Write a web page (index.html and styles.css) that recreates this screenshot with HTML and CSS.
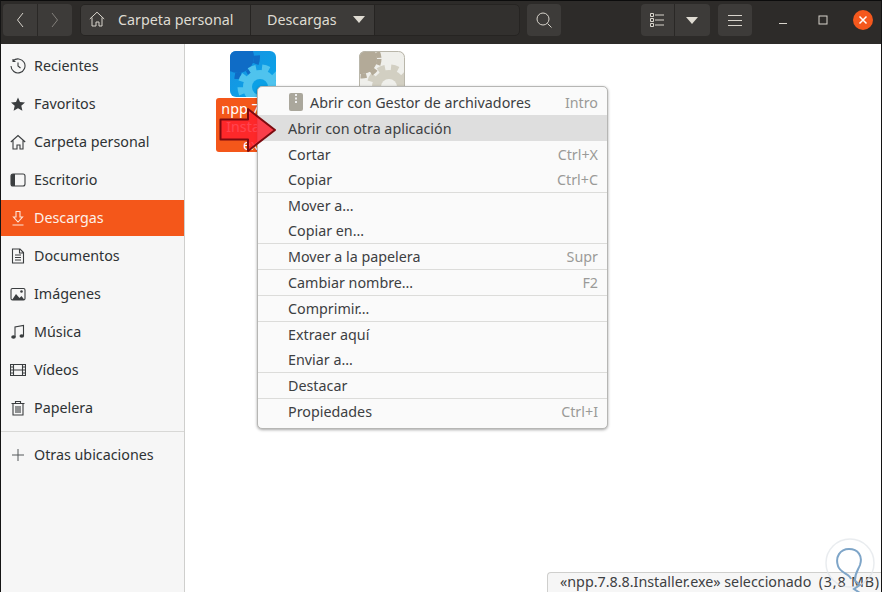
FILE: index.html
```html
<!DOCTYPE html>
<html lang="es">
<head>
<meta charset="utf-8">
<title>Descargas</title>
<link rel="stylesheet" href="styles.css">
</head>
<body>
<div class="window">
  <header class="topbar">
    <div class="btn-group nav-group">
      <button class="tbtn"><svg width="12" height="18" viewBox="0 0 12 18"><path d="M9 2 3.500 9 9 16" class="ico-line"/></svg></button>
      <button class="tbtn dim"><svg width="12" height="18" viewBox="0 0 12 18"><path d="M3 2 8.500 9 3 16" class="ico-line"/></svg></button>
    </div>
    <div class="pathbar">
      <div class="crumb crumb-home">
        <svg width="16" height="16" viewBox="0 0 16 16"><path d="M.8 8 8 1.200 15.200 8M3 6.500V15h4v-4h3v4h3V6.500" class="ico-line"/></svg>
        <span>Carpeta personal</span>
      </div>
      <div class="crumb crumb-last"><span>Descargas</span><i class="caret"></i></div>
    </div>
    <button class="tbtn solo search"><svg width="18" height="18" viewBox="0 0 18 18"><circle cx="8" cy="8" r="6" class="ico-line"/><path d="m12.500 12.500 4 4" class="ico-line"/></svg></button>
    <div class="btn-group view-group">
      <button class="tbtn"><svg width="14" height="14" viewBox="0 0 14 14"><path d="M5 2h9M5 7h9M5 12h9" class="ico-line"/><path d="M.5.500h3v3h-3zM.5 5.500h3v3h-3zM.5 10.500h3v3h-3z" class="ico-line"/></svg></button>
      <button class="tbtn"><i class="caret caret-big"></i></button>
    </div>
    <button class="tbtn solo burger"><svg width="14" height="12" viewBox="0 0 14 12"><path d="M0 1.500h14M0 6.500h14M0 11.500h14" class="ico-line"/></svg></button>
    <div class="winctl">
      <svg class="wmin" width="10" height="10" viewBox="0 0 10 10"><path d="M1 8.500h8" class="ico-line"/></svg>
      <svg class="wmax" width="10" height="10" viewBox="0 0 10 10"><rect x="1" y="1" width="8" height="8" class="ico-line"/></svg>
      <span class="wclose"><svg width="10" height="10" viewBox="0 0 10 10"><path d="m1.500 1.500 7 7M8.500 1.500l-7 7" class="ico-close"/></svg></span>
    </div>
  </header>
  <div class="content">
    <nav class="sidebar">
      <a class="place"><svg width="16" height="16" viewBox="0 0 16 16"><path d="M3 3a7 7 0 1 1-2 5M3 1v2.500h2.500M8 4.500V8l2.500 2" class="sb-line"/></svg><span>Recientes</span></a>
      <a class="place"><svg width="16" height="16" viewBox="0 0 16 16"><path d="m8 1.500 2 4.500 5 .5-3.700 3.300 1.100 4.900L8 12.200l-4.400 2.500 1.100-4.900L1 6.500 6 6z" class="sb-fill"/></svg><span>Favoritos</span></a>
      <a class="place"><svg width="16" height="16" viewBox="0 0 16 16"><path d="M.8 8 8 1.500 15.200 8M3 6.500V15h4v-4h3v4h3V6.500" class="sb-line"/></svg><span>Carpeta personal</span></a>
      <a class="place"><svg width="16" height="16" viewBox="0 0 16 16"><rect x="1" y="2" width="14" height="12" rx="2" class="sb-line"/><path d="M1 4a2 2 0 0 1 2-2h2v12H3a2 2 0 0 1-2-2z" class="sb-fill"/></svg><span>Escritorio</span></a>
      <a class="place active"><svg width="16" height="16" viewBox="0 0 16 16"><path d="M6 1.500h4V7h2.500L8 12 3.500 7H6zM2.500 15h11" class="sb-line-w"/></svg><span>Descargas</span></a>
      <a class="place"><svg width="16" height="16" viewBox="0 0 16 16"><path d="M2.500 1h7.500l3.500 3.500V15h-11zM5 7h6M5 9.500h6M5 12h6M9.500 1v4h4" class="sb-line"/></svg><span>Documentos</span></a>
      <a class="place"><svg width="16" height="16" viewBox="0 0 16 16"><rect x="1" y="2.500" width="14" height="11.500" rx="1.500" class="sb-line"/><path d="m2 14 4-6 3.500 4 2-2 3 4z" class="sb-fill"/><circle cx="11.500" cy="5.500" r="1.300" class="sb-fill"/></svg><span>Imágenes</span></a>
      <a class="place"><svg width="16" height="16" viewBox="0 0 16 16"><path d="M5 13V3l8.500-1.500V12" class="sb-line"/><ellipse cx="3.500" cy="13" rx="2.300" ry="1.800" class="sb-fill"/><ellipse cx="11.800" cy="12" rx="2.300" ry="1.800" class="sb-fill"/></svg><span>Música</span></a>
      <a class="place"><svg width="16" height="16" viewBox="0 0 16 16"><path d="M.5 2.500h15v11H.5zM3.500 2.500v11M12.500 2.500v11M3.500 8h9M.5 5h3M.5 8h3M.5 11h3M12.500 5h3M12.500 8h3M12.500 11h3" class="sb-line"/></svg><span>Vídeos</span></a>
      <a class="place"><svg width="16" height="16" viewBox="0 0 16 16"><path d="M1.500 3.500h13M5.500 3.500V1.500h5v2M3 3.500V15h10V3.500M6 6v7M8 6v7M10 6v7" class="sb-line"/></svg><span>Papelera</span></a>
      <hr class="sb-sep">
      <a class="place place-other"><svg width="16" height="16" viewBox="0 0 16 16"><path d="M8 2v12M2 8h12" class="sb-thin"/></svg><span>Otras ubicaciones</span></a>
    </nav>
    <main class="files">
      <div class="file selected">
        <svg class="app-ico" width="46" height="46" viewBox="0 0 46 46">
          <defs>
            <clipPath id="r1"><rect width="46" height="46" rx="6"/></clipPath>
            <linearGradient id="b1" x1="0" y1="0" x2="1" y2="1"><stop offset="0" stop-color="#1a8fe0"/><stop offset="1" stop-color="#06a8ea"/></linearGradient>
          </defs>
          <g clip-path="url(#r1)">
            <rect width="46" height="46" fill="url(#b1)"/>
            <circle cx="8" cy="6" r="16" fill="#0f6cc6"/>
            <circle cx="8" cy="6" r="19" fill="none" stroke="#0f6cc6" stroke-width="6" stroke-dasharray="7 6"/>
            <circle cx="30" cy="36" r="19" fill="none" stroke="#4fc3ee" stroke-width="7" stroke-dasharray="7 6"/>
            <circle cx="30" cy="36" r="17" fill="#4fc3ee"/>
            <circle cx="30" cy="36" r="8" fill="#0aa0e6"/>
          </g>
        </svg>
        <div class="file-label">npp.7.8.8.<br>Installer.<br>exe</div>
      </div>
      <div class="file">
        <svg class="app-ico" width="46" height="46" viewBox="0 0 46 46">
          <defs><clipPath id="r2"><rect width="46" height="46" rx="6"/></clipPath></defs>
          <g clip-path="url(#r2)">
            <rect width="46" height="46" fill="#efefeb"/>
            <circle cx="30" cy="36" r="19" fill="none" stroke="#d2cfc2" stroke-width="7" stroke-dasharray="7 6"/>
            <circle cx="30" cy="36" r="17" fill="#d2cfc2"/>
            <circle cx="30" cy="36" r="8" fill="#efefeb"/>
            <circle cx="3" cy="8" r="15" fill="#b3aa98"/>
            <circle cx="3" cy="8" r="17" fill="none" stroke="#b3aa98" stroke-width="5" stroke-dasharray="6 5"/>
          </g>
          <rect x=".5" y=".5" width="45" height="45" rx="6" fill="none" stroke="#b9b6aa"/>
        </svg>
      </div>
    </main>
  </div>

  <div class="menu">
    <div class="mi mi-tall mi-icon"><svg width="14" height="18" viewBox="0 0 14 18"><rect width="14" height="18" rx="2" fill="#aaa79c"/><path d="M7 1v9" stroke="#eee" stroke-width="2" stroke-dasharray="2 1.500"/></svg><span>Abrir con Gestor de archivadores</span><kbd>Intro</kbd></div>
    <div class="mi mi-tall hover"><span>Abrir con otra aplicación</span></div>
    <div class="mi mi-after-hover"><span>Cortar</span><kbd>Ctrl+X</kbd></div>
    <div class="mi"><span>Copiar</span><kbd>Ctrl+C</kbd></div>
    <hr class="msep">
    <div class="mi"><span>Mover a…</span></div>
    <div class="mi"><span>Copiar en…</span></div>
    <hr class="msep">
    <div class="mi"><span>Mover a la papelera</span><kbd>Supr</kbd></div>
    <hr class="msep">
    <div class="mi"><span>Cambiar nombre…</span><kbd>F2</kbd></div>
    <hr class="msep">
    <div class="mi"><span>Comprimir…</span></div>
    <hr class="msep">
    <div class="mi"><span>Extraer aquí</span></div>
    <div class="mi"><span>Enviar a…</span></div>
    <hr class="msep">
    <div class="mi"><span>Destacar</span></div>
    <hr class="msep">
    <div class="mi"><span>Propiedades</span><kbd>Ctrl+I</kbd></div>
  </div>

  <svg class="arrow" width="60" height="46" viewBox="0 0 60 46"><path d="M1.500 12.500H29V2l27 21-27 21V32.500H1.500z" fill="#ff1f2d" fill-opacity=".84" stroke="#7c0b10" stroke-width="2" stroke-linejoin="round"/></svg>

  <div class="status">«npp.7.8.8.Installer.exe» seleccionado&nbsp; <span class="status-size">(3,8 MB)</span></div>

  <svg class="mark" width="50" height="60" viewBox="0 0 50 60"><circle cx="25" cy="25" r="24" fill="none" stroke="#dfe4e8" stroke-width="1.500" opacity=".7"/><path d="M26 41c-1-5-11-6-13-13-3-9 2-17 11-17s14 7 11 16c-2 5-5 8-5 15 0 2 4 3 5 5l-6 4 6 4" fill="none" stroke="#7ea5c8" stroke-width="2"/></svg>
</div>
</body>
</html>
```
FILE: styles.css
```css
* { box-sizing: border-box; }
html, body { margin: 0; padding: 0; }
body { width: 882px; height: 592px; overflow: hidden; background: #111; font-family: "Noto Sans", "Liberation Sans", sans-serif; }
svg { display: block; flex: none; }

.window { position: relative; width: 882px; height: 592px; display: flex; flex-direction: column; border-top: 1px solid #0c0c0c; border-left: 1px solid #141414; border-right: 1px solid #141414; background: #fff; overflow: hidden; }

.topbar { height: 43px; flex: none; background: #2d2b29; display: flex; align-items: flex-start; padding: 3px 0 0 2px; color: #dfdbd2; font-size: 14.300px; }
.btn-group { display: flex; height: 32px; }
.tbtn { width: 34.500px; height: 32px; padding: 0; border: 0; background: #3d3b39; display: flex; align-items: center; justify-content: center; }
.btn-group .tbtn:first-child { border-radius: 4px 0 0 4px; border-right: 1px solid #2a2826; }
.btn-group .tbtn:last-child { border-radius: 0 4px 4px 0; }
.tbtn.dim svg { opacity: .45; }
.tbtn.solo { border-radius: 4px; width: 34px; }
.ico-line { fill: none; stroke: #d8d4cc; stroke-width: 1; }
.ico-close { fill: none; stroke: #fff; stroke-width: 1.500; }

.pathbar { width: 440px; height: 32px; margin-left: 8px; background: #32302e; border: 1px solid #262422; border-radius: 5px; display: flex; }
.crumb { height: 100%; background: #3d3b39; display: flex; align-items: center; border-right: 1px solid #262422; padding-bottom: 2px; }
.crumb-home { width: 170px; padding-left: 8px; gap: 13px; border-radius: 4px 0 0 4px; }
.crumb-last { width: 124px; padding-left: 16px; }
.caret { display: block; width: 0; height: 0; border-left: 6px solid transparent; border-right: 6px solid transparent; border-top: 7px solid #dfdbd2; margin-left: 16px; }
.caret-big { margin-left: 0; }
.search { margin-left: 7px; }
.view-group { margin-left: 80px; }
.burger { margin-left: 8.500px; }
.winctl { margin-left: 25px; position: relative; width: 104px; height: 32px; display: flex; align-items: center; }
.wmin { margin-left: 1px; }
.wmax { margin-left: 30px; }
.wclose { margin-left: 25px; width: 20px; height: 20px; border-radius: 50%; background: #f4581d; display: flex; align-items: center; justify-content: center; }

.content { flex: 1; display: flex; min-height: 0; }
.sidebar { width: 184px; flex: none; background: #f6f6f6; border-right: 1px solid #cfcfcd; padding-top: 4px; color: #2e3234; font-size: 14.300px; }
.place { height: 36px; margin-bottom: 2px; display: flex; align-items: center; padding: 0 0 1px 9px; gap: 8px; }
.place.active { background: #f4571a; color: #fdf0e8; }
.place-other { margin-top: 5px; }
.sb-line { fill: none; stroke: #3a3d3f; stroke-width: 1.100; }
.sb-line-w { fill: none; stroke: #fde6d8; stroke-width: 1.100; }
.sb-thin { fill: none; stroke: #55585a; stroke-width: 1; }
.sb-fill { fill: #3a3d3f; stroke: none; }
.sb-sep { height: 1px; border: 0; margin: 5px 0 0; background: #d8d8d6; }

.files { flex: 1; background: #fff; display: flex; align-items: flex-start; gap: 55px; padding: 7px 0 0 31px; }
.file { width: 74px; display: flex; flex-direction: column; align-items: center; }
.file-label { width: 74px; height: 54px; margin-top: 1px; padding: 2px 0 0 3px; background: #f4571a; border-radius: 3px; color: #fff; font-size: 14.300px; line-height: 18px; text-align: center; }

.menu { position: absolute; left: 256px; top: 85px; width: 351px; height: 343px; padding: 2px 0 4px; background: #fafafa; border: 1px solid #b6b6b4; border-radius: 5px; box-shadow: 0 1px 3px rgba(0,0,0,.35); color: #3d4042; font-size: 14.300px; }
.mi { height: 25px; display: flex; align-items: center; padding: 0 9px 0 30px; }
.mi-tall { height: 26px; }
.mi-after-hover { margin-top: 1px; }
.mi-icon { gap: 7px; }
.mi-icon svg { margin: -1px 0 0 1px; }
.mi kbd { margin-left: auto; font: inherit; color: #9a9a98; }
.mi.hover { background: #dedede; }
.msep { height: 1px; border: 0; margin: 0; background: #dcdcda; }

.arrow { position: absolute; left: 218px; top: 106px; }
.status { position: absolute; right: -1px; bottom: 0; width: 335px; height: 20px; padding-left: 12px; background: #f6f6f6; border: 1px solid #cfcfcd; border-width: 1px 0 0 1px; border-radius: 4px 0 0 0; color: #3d4042; font-size: 14.300px; line-height: 18px; white-space: nowrap; }
.status-size { letter-spacing: .8px; }
.mark { position: absolute; left: 824px; top: 537px; }
```
